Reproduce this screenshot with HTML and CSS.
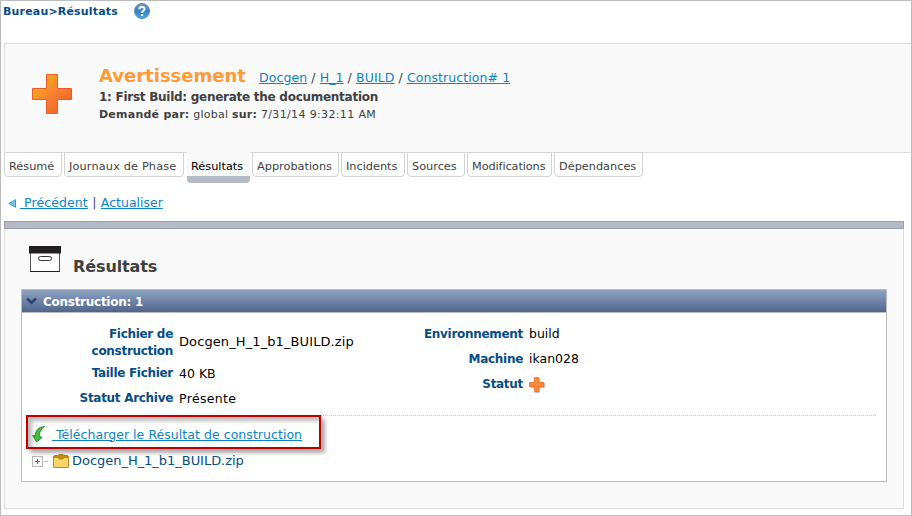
FILE: index.html
```html
<!DOCTYPE html>
<html lang="fr">
<head>
<meta charset="utf-8">
<title>Résultats</title>
<link rel="stylesheet" href="styles.css">
</head>
<body>
<header class="crumbs">
  <strong>Bureau&gt;Résultats</strong>
  <svg class="help" width="16" height="16" viewBox="0 0 16 16">
    <defs><linearGradient id="blue" x1="0" y1="0" x2="0" y2="1"><stop offset="0" stop-color="#6d9bd3"/><stop offset=".5" stop-color="#3b7fc2"/><stop offset="1" stop-color="#3fb0ea"/></linearGradient></defs>
    <circle cx="8" cy="8" r="7.5" fill="url(#blue)" stroke="#5f87b3"/>
    <path d="M5.4 6.2C5.4 3.2 10.6 3.2 10.6 6C10.6 7.8 8 7.8 8 9.8" fill="none" stroke="#fff" stroke-width="2"/>
    <rect x="7" y="11" width="2" height="2" fill="#fff"/>
  </svg>
</header>

<section class="summary">
  <svg class="plus" width="40" height="40" viewBox="0 0 40 40">
    <defs><linearGradient id="orange" x1="0" y1="0" x2="1" y2="1"><stop offset=".12" stop-color="#fbb016"/><stop offset=".5" stop-color="#f58233"/><stop offset=".85" stop-color="#f26522"/></linearGradient></defs>
    <path d="M14.5.5h11v14h14v11h-14v14h-11v-14H.5v-11h14z" fill="url(#orange)" stroke="#f15a29"/>
  </svg>
  <div>
    <div class="title-row">
      <h1>Avertissement</h1>
      <nav class="path"><a href="#">Docgen</a> / <a href="#">H_1</a> / <a href="#">BUILD</a> / <a href="#">Construction# 1</a></nav>
    </div>
    <div class="build-name">1: First Build: generate the documentation</div>
    <div class="request"><b>Demandé par:</b> global <b>sur:</b> <span class="date">7/31/14 9:32:11 AM</span></div>
  </div>
</section>

<nav class="tabs">
  <a class="tab t-resume">Résumé</a>
  <a class="tab t-phase">Journaux de Phase</a>
  <a class="tab t-results active">Résultats</a>
  <a class="tab t-approvals">Approbations</a>
  <a class="tab t-issues">Incidents</a>
  <a class="tab t-sources">Sources</a>
  <a class="tab t-changes">Modifications</a>
  <a class="tab t-deps">Dépendances</a>
</nav>

<div class="actions">
  <svg width="8" height="9" viewBox="0 0 8 9"><path d="M7.5.7v7.6L.8 4.5z" fill="#7cc4e6" stroke="#3a9bcf"/></svg>
  <a href="#" class="prev">&nbsp;Précédent</a><span class="sep">|</span><a href="#">Actualiser</a>
</div>

<main class="panel">
  <div class="panel-bar"></div>
  <div class="panel-title">
    <svg width="32" height="27" viewBox="0 0 32 27">
      <path d="M1.5 7v18.5h29V7" fill="#fff" stroke="#555"/>
      <path d="M1 25.5h30" stroke="#231f20"/>
      <rect width="32" height="7.5" fill="#231f20"/>
      <rect x="9.5" y="10.5" width="13" height="4" rx="2" fill="#fff" stroke="#333"/>
    </svg>
    <h2>Résultats</h2>
  </div>

  <section class="box">
    <div class="box-head">
      <svg width="11" height="8" viewBox="0 0 11 8"><path d="M1 1.5l4.5 4.2L10 1.5" fill="none" stroke="#2c456d" stroke-width="2.7"/></svg>
      <span>Construction: 1</span>
    </div>
    <div class="details">
      <dl class="left">
        <dt>Fichier de construction</dt><dd class="file">Docgen_H_1_b1_BUILD.zip</dd>
        <dt>Taille Fichier</dt><dd>40 KB</dd>
        <dt>Statut Archive</dt><dd class="state">Présente</dd>
      </dl>
      <dl class="right">
        <dt>Environnement</dt><dd>build</dd>
        <dt>Machine</dt><dd>ikan028</dd>
        <dt>Statut</dt>
        <dd><svg class="mini" width="16" height="16" viewBox="0 0 16 16"><path d="M6 1.500h4.500V6H15.500v4.500h-5V15.500H6v-5H1.500V6H6z" fill="#9b6a4c"/><path d="M5.500.5h4v5h5v4h-5v5h-4v-5h-5v-4h5z" fill="#fb8b35" stroke="#ed7a34"/></svg></dd>
      </dl>
    </div>
    <div class="rule"></div>
    <div class="download">
      <svg width="13" height="17" viewBox="0 0 13 17"><path d="M12.500.6C7 .8 3.200 4.500 3.200 9.800L.6 9.500 4.600 16l5.600-4.600-2.800-.8C7 7 9 3 12.500.6z" fill="#3fc03c" stroke="#23852a" stroke-width=".9"/></svg>
      <a href="#">&nbsp;Télécharger le Résultat de construction</a>
      <span class="mark"></span>
    </div>
    <div class="tree">
      <svg width="17" height="11" viewBox="0 0 17 11"><rect x=".5" y=".5" width="10" height="10" fill="#f8f8f8" stroke="#b8b8b8"/><path d="M3 5.500h5M5.500 3v5" stroke="#666"/><path d="M12 5.500h4" stroke="#bbb" /></svg>
      <svg class="folder" width="16" height="14" viewBox="0 0 16 14"><path d="M.5 5V2.500L1.500 1.500H5L6 .5h4l1 1h3.500l1 1V5z" fill="#c58a10" stroke="#b17c14"/><path d="M.5 3.500H5L6 5h4l1-1.500h4.500v9.500q0 .5-.5.5H1q-.5 0-.5-.5z" fill="#f9d469" stroke="#b98a28"/></svg>
      <span class="file">Docgen_H_1_b1_BUILD.zip</span>
    </div>
  </section>
</main>
</body>
</html>
```

FILE: styles.css
```css
* { box-sizing: border-box; }

body {
  margin: 0;
  width: 912px;
  height: 516px;
  border: 1px solid #bcbcbc;
  padding-left: 3px;
  background: #fff;
  color: #404040;
  font: 12.5px/16px "DejaVu Sans", Verdana, sans-serif;
  overflow: hidden;
}

h1, h2, dl, dd { margin: 0; }
svg { display: block; flex: none; }
a { color: #0a84cc; text-underline-offset: 1px; text-decoration-thickness: 1px; }

.crumbs {
  display: flex;
  align-items: center;
  height: 20px;
  margin: 0 0 22px -1px;
  color: #044d87;
  font-size: 11px;
  letter-spacing: .18px;
}
.crumbs strong { padding-top: 1px; }
.help { margin-left: 16px; }

.summary {
  display: flex;
  height: 110px;
  border: 1px solid #dcdcdc;
  border-right: 0;
  background: #f9f9f9;
}
.plus { margin: 30px 27px 0; }
.title-row { display: flex; align-items: baseline; height: 24px; margin-top: 20px; }
h1 { width: 160px; color: #f93; font-size: 18px; line-height: 24px; }
.path { white-space: nowrap; letter-spacing: .09px; }
.build-name { margin-top: 1px; font-weight: bold; font-size: 12px; line-height: 16px; letter-spacing: -.27px; }
.request { margin-top: 1px; font-size: 11px; line-height: 18px; letter-spacing: .24px; }
.date { letter-spacing: .36px; }

.tabs { display: flex; gap: 2px; height: 31px; margin-top: -1px; align-items: flex-start; }
.tab {
  height: 25px;
  padding-left: 4px;
  border: 1px solid #d2d2d2;
  border-radius: 0 0 4px 4px;
  background: #fff;
  color: #404040;
  font-size: 11.3px;
  line-height: 27px;
  white-space: nowrap;
}
.tab.active { height: 31px; border: 0; border-bottom: 7px solid #b4bac6; background: #f9f9f9; color: #000; line-height: 29px; }
.t-resume { width: 58px; }
.t-phase { width: 120px; letter-spacing: .15px; }
.t-results { width: 63px; margin-left: 1px; }
.t-approvals { width: 87px; }
.t-issues { width: 64px; }
.t-sources { width: 58px; }
.t-changes { width: 85px; letter-spacing: -.1px; }
.t-deps { width: 89px; }

.actions { display: flex; align-items: center; height: 16px; margin: 12px 0 10px 4px; }
.prev { margin-left: 4px; letter-spacing: .1px; }
.sep { width: 13px; text-align: center; color: #44449a; }

.panel { width: 900px; height: 288px; border: 1px solid #dcdcdc; border-top: 0; background: #f9f9f9; }
.panel-bar { height: 8px; margin: 0 -1px; border: 1px solid #979dab; background: #b4bac6; }
.panel-title { display: flex; height: 60px; padding: 17px 0 0 24px; }
.panel-title h2 { margin: 11px 0 0 12px; font-size: 16px; line-height: 20px; letter-spacing: -.1px; }

.box { width: 866px; height: 193px; margin-left: 16px; border: 1px solid #bcbcbc; background: #fff; }
.box-head {
  display: flex;
  align-items: center;
  height: 23px;
  padding-left: 4px;
  border-bottom: 1px solid #bcbcbc;
  background: linear-gradient(#8ea2c2, #50658c);
  color: #fff;
  font-weight: bold;
  font-size: 12px;
  letter-spacing: -.27px;
}
.box-head span { margin-left: 6px; padding-top: 1px; }

.details { display: flex; height: 102px; color: #000; }
dl { display: grid; align-items: center; align-content: start; column-gap: 6px; }
dt { padding-top: 1px; color: #044d87; font-weight: bold; font-size: 12px; line-height: 17px; letter-spacing: -.3px; text-align: right; }
.left { grid-template: 36px 25px 25px / 151px 180px; padding-top: 11px; }
.left dt:first-child { padding-left: 55px; }
.left dd { padding-top: 2px; }
.left dd.file { padding-top: 0; }
.state { letter-spacing: .35px; }
.right { grid-template: 25px 25px 25px / 164px 100px; padding-top: 8px; }
.file { font-size: 13px; letter-spacing: .1px; }
.mini { margin-top: 2px; }

.rule { width: 850px; height: 1px; margin-left: 5px; background: repeating-linear-gradient(90deg, #c8c8c8 0 1px, #fff 1px 2px); }
.download { position: relative; display: flex; align-items: center; height: 37px; padding-left: 10px; }
.download a { margin-left: 7px; letter-spacing: .05px; }
.mark {
  position: absolute;
  left: 4px;
  top: -1px;
  width: 295px;
  height: 34px;
  border: 2px solid #c00000;
  box-shadow: 4px 4px 4px #0005, inset 4px 4px 4px #0004;
}
.tree { display: flex; align-items: center; height: 16px; padding-left: 10px; color: #044d87; }
.folder { margin: 0 3px 0 4px; }
.tree .file { letter-spacing: -.03px; }
```
